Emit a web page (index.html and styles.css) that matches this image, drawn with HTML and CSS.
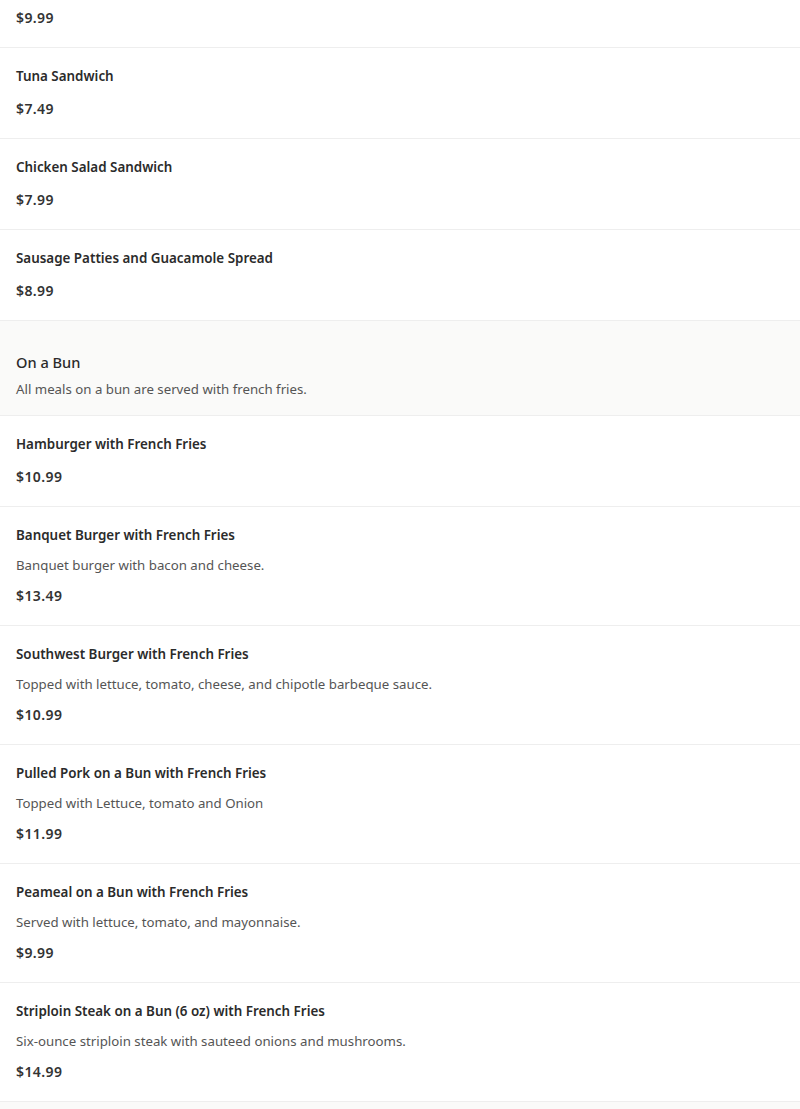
FILE: index.html
```html
<!DOCTYPE html>
<html>
<head>
<meta charset="utf-8">
<link rel="stylesheet" href="styles.css">
</head>
<body>
<div class="menu">
  <div class="item item-cut">
    <div class="price">$9.99</div>
  </div>
  <div class="item">
    <div class="name">Tuna Sandwich</div>
    <div class="price">$7.49</div>
  </div>
  <div class="item">
    <div class="name">Chicken Salad Sandwich</div>
    <div class="price">$7.99</div>
  </div>
  <div class="item">
    <div class="name">Sausage Patties and Guacamole Spread</div>
    <div class="price">$8.99</div>
  </div>
  <div class="section">
    <div class="section-title">On a Bun</div>
    <div class="section-desc">All meals on a bun are served with french fries.</div>
  </div>
  <div class="item">
    <div class="name">Hamburger with French Fries</div>
    <div class="price">$10.99</div>
  </div>
  <div class="item">
    <div class="name">Banquet Burger with French Fries</div>
    <div class="desc">Banquet burger with bacon and cheese.</div>
    <div class="price">$13.49</div>
  </div>
  <div class="item">
    <div class="name">Southwest Burger with French Fries</div>
    <div class="desc">Topped with lettuce, tomato, cheese, and chipotle barbeque sauce.</div>
    <div class="price">$10.99</div>
  </div>
  <div class="item">
    <div class="name">Pulled Pork on a Bun with French Fries</div>
    <div class="desc">Topped with Lettuce, tomato and Onion</div>
    <div class="price">$11.99</div>
  </div>
  <div class="item">
    <div class="name">Peameal on a Bun with French Fries</div>
    <div class="desc">Served with lettuce, tomato, and mayonnaise.</div>
    <div class="price">$9.99</div>
  </div>
  <div class="item">
    <div class="name">Striploin Steak on a Bun (6 oz) with French Fries</div>
    <div class="desc">Six-ounce striploin steak with sauteed onions and mushrooms.</div>
    <div class="price">$14.99</div>
  </div>
  <div class="section section-next"></div>
</div>
</body>
</html>
```

FILE: styles.css
```css
html, body {
  margin: 0;
  padding: 0;
  background: #ffffff;
}
body {
  font-family: "Noto Sans", "Open Sans", sans-serif;
  color: #2d2d2d;
  overflow: hidden;
}
.menu {
  display: flex;
  flex-direction: column;
}
.item {
  padding: 18px 16px 19px;
  border-bottom: 1px solid #eeeeee;
  display: flex;
  flex-direction: column;
}
.item-cut {
  padding-top: 8px;
}
.name {
  font-size: 13.4px;
  font-weight: 600;
  line-height: 20px;
  color: #2b2b2b;
}
.desc {
  font-size: 13.25px;
  line-height: 20px;
  color: #555555;
  margin-top: 10px;
}
.price {
  font-size: 14px;
  font-weight: 600;
  letter-spacing: 0.4px;
  line-height: 20px;
  color: #333333;
  margin-top: 11px;
}
.name + .price {
  margin-top: 13px;
}
.item-cut .price {
  margin-top: 0;
}
.section {
  background: #fafaf9;
  padding: 31px 16px 16px;
  border-bottom: 1px solid #eeeeee;
}
.section-next {
  height: 60px;
  padding: 0;
  border-bottom: 0;
}
.section-title {
  font-size: 14.6px;
  font-weight: 500;
  line-height: 20px;
  color: #2b2b2b;
}
.section-desc {
  font-size: 13.25px;
  line-height: 20px;
  color: #555555;
  margin-top: 7px;
}
```
